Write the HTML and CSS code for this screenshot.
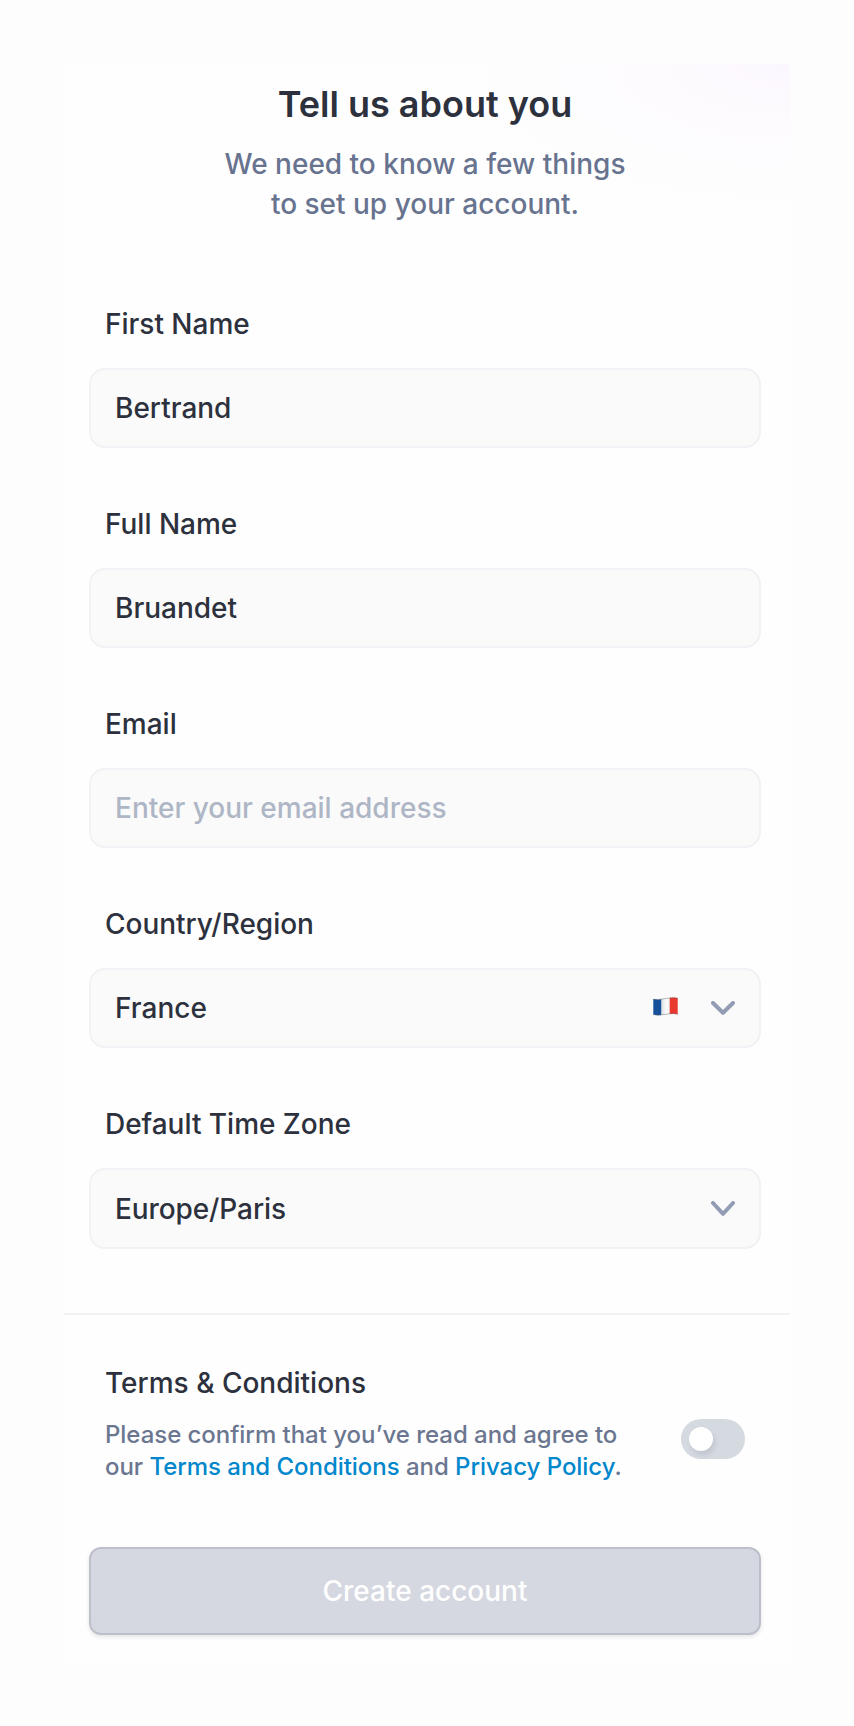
FILE: index.html
```html
<!DOCTYPE html>
<html lang="en">
<head>
<meta charset="utf-8">
<title>Tell us about you</title>
<link rel="stylesheet" href="styles.css">
</head>
<body>
<main class="card">
  <header class="intro">
    <h1 class="title">Tell us about you</h1>
    <p class="subtitle">We need to know a few things<br>to set up your account.</p>
  </header>
  <form class="form">
    <div class="field"><span class="label">First Name</span><div class="control"><span class="value">Bertrand</span></div></div>
    <div class="field"><span class="label">Full Name</span><div class="control"><span class="value">Bruandet</span></div></div>
    <div class="field"><span class="label">Email</span><div class="control"><span class="value placeholder">Enter your email address</span></div></div>
    <div class="field"><span class="label">Country/Region</span><div class="control"><span class="value">France</span>
      <svg class="flag" width="25" height="19" viewBox="0 0 25 19">
        <defs><linearGradient id="fold"><stop offset="0" stop-color="#dcdee0"/><stop offset=".6" stop-color="#fcfcfc"/><stop offset="1" stop-color="#eee"/></linearGradient></defs>
        <path d="M.3 2Q4 3 8.5 1.9V18Q4 18.9 .3 17.6Z" fill="#16509a"/><path d="M8.5 1.9 16.7.8V17L8.5 18Z" fill="url(#fold)"/><path d="M16.7.8Q21 0 24.7 1V17.3Q21 16.4 16.7 17Z" fill="#e8382f"/>
        <path class="flag-edge" d="M.3 2.2Q4 3.2 8.5 2.1L16.7 1Q21 .3 24.7 1.2M.3 17.5Q4 18.7 8.5 17.8L16.7 16.8Q21 16.2 24.7 17.1"/></svg>
      <svg class="chevron" width="24" height="14" viewBox="0 0 24 14"><path d="M2 2 12 11.8 22 2"/></svg></div></div>
    <div class="field"><span class="label">Default Time Zone</span><div class="control tall"><span class="value">Europe/Paris</span>
      <svg class="chevron" width="24" height="15" viewBox="0 0 24 15"><path d="M2 2 12 12.8 22 2"/></svg></div></div>
  </form>
  <section class="terms">
    <div>
      <h2 class="terms-title">Terms &amp; Conditions</h2>
      <p class="terms-text">Please confirm that you’ve read and agree to<br>our <a class="link">Terms and Conditions</a> and <a class="link">Privacy Policy</a>.</p>
    </div>
    <span class="toggle"><span class="knob"></span></span>
  </section>
  <button class="submit" type="button">Create account</button>
</main>
</body>
</html>
```
FILE: styles.css
```css
* { box-sizing: border-box; }
body { margin: 0; padding: 64px; background: #fdfdfd; font-family: Inter, sans-serif; font-weight: 500; color: #2c313d; }
.card { width: 726px; height: 1598px; background: radial-gradient(ellipse 340px 150px at 100% 0, #fcf7ff, #fdfbfe 40%, #fefefe00), #fefefe; }
.intro { height: 234px; padding: 15px 4px 0 0; text-align: center; }
.title { margin: 0; font-size: 36px; line-height: 50px; font-weight: 600; }
.subtitle { margin: 15px 0 0; font-size: 28px; line-height: 40px; color: #67738f; }
.form { height: 1017px; padding: 6px 29px 0 25px; border-bottom: 2px solid #f1f1f6; }
.field { height: 200px; }
.label { display: block; height: 64px; padding-left: 16px; font-size: 28px; line-height: 40px; letter-spacing: -.02px; }
.control { height: 80px; border: 2px solid #f1f1f6; border-radius: 16px; background: #fafafa; padding: 0 24px; display: flex; align-items: center; font-size: 28px; }
.tall { height: 81px; letter-spacing: -.1px; }
.value { flex: 1; }
.placeholder { color: #aeb6c6; }
.chevron { fill: none; stroke: #929cb3; stroke-width: 4; stroke-linecap: round; stroke-linejoin: round; }
.flag { margin: 0 33px 3px 0; }
.flag-edge { fill: none; stroke: #5b5b60; stroke-opacity: .5; stroke-width: .8; }
.terms { height: 232px; padding: 48px 45px 0 41px; display: flex; justify-content: space-between; }
.terms-title { margin: 0; font-size: 28px; line-height: 40px; font-weight: 500; }
.terms-text { margin: 16px 0 0; font-size: 24px; line-height: 32px; letter-spacing: -.04px; color: #6b7690; }
.link { color: #0087cc; }
.toggle { width: 64px; height: 40px; margin-top: 56px; padding: 8px; border-radius: 20px; background: #d5d9e0; }
.knob { display: block; width: 24px; height: 24px; border-radius: 50%; background: #fff; box-shadow: 2px 4px 5px rgba(60, 65, 85, .12); }
.submit { display: block; width: 672px; height: 88px; margin-left: 25px; border: 2px solid #bdc0ca; border-radius: 12px; background: #d5d8e0; color: #fefefe; font: 500 28px Inter, sans-serif; box-shadow: 0 2px 4px rgba(0, 0, 0, .1); }
```
